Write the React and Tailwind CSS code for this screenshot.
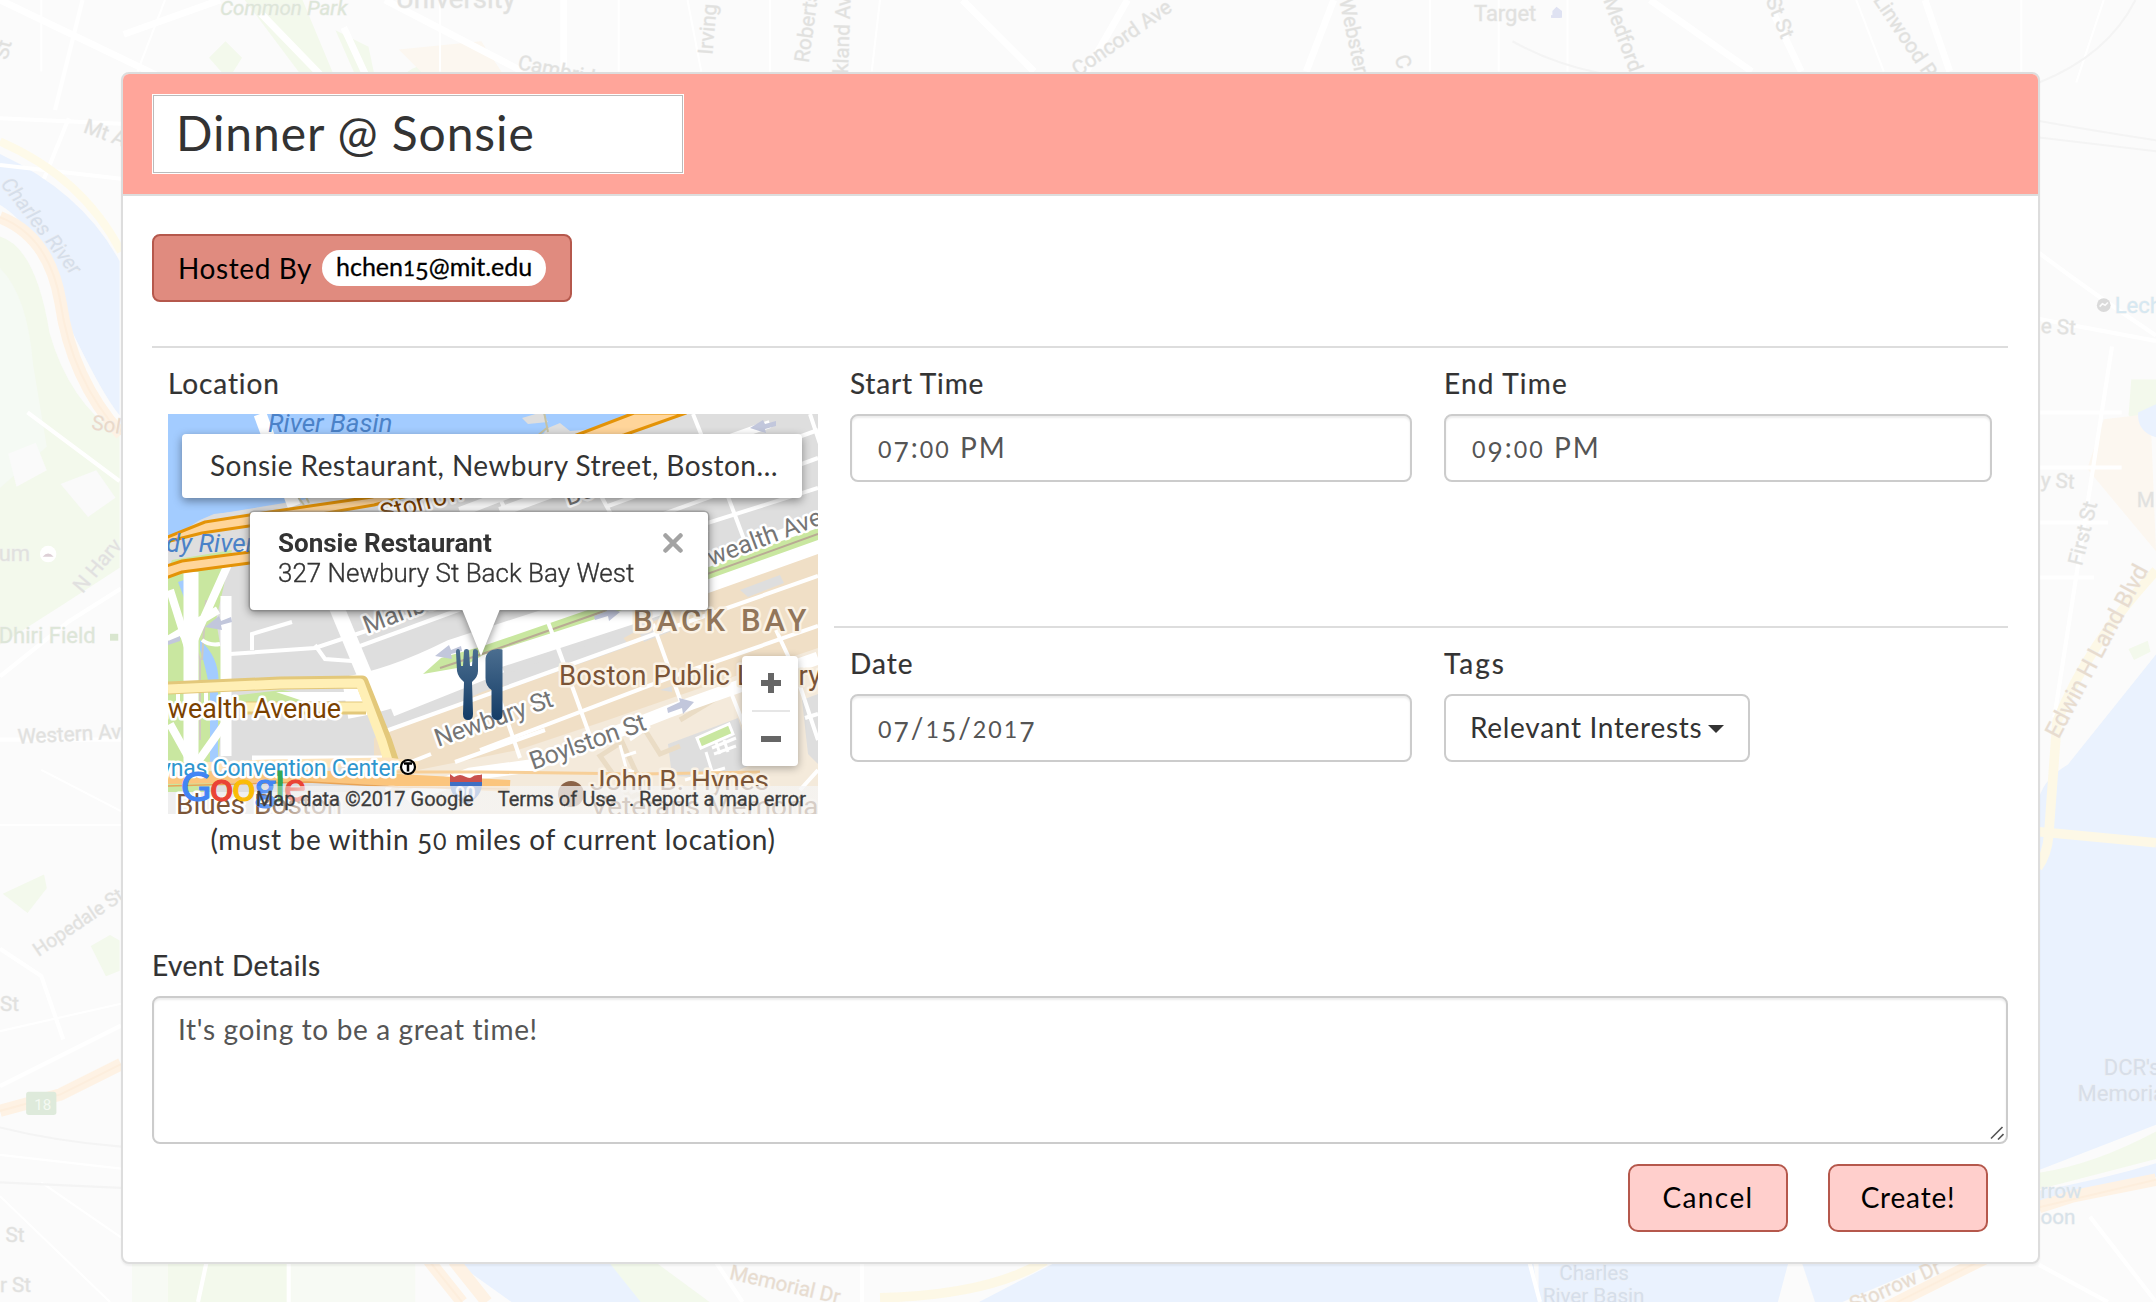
const LATO = "font-['Lato','Liberation_Sans',sans-serif]";

/* Old-style figures: 0, 1, 2 sit at x-height; 3, 4, 5, 7, 9 hang below the baseline. */
function OldStyle({ children }) {
  return (
    <span className="whitespace-pre">
      {children.split("").map((c, i) => {
        if ("012".includes(c)) return <span key={i} className="text-[0.83em]">{c}</span>;
        if ("34579".includes(c)) return <span key={i} className="relative top-[0.17em] text-[0.94em]">{c}</span>;
        return c;
      })}
    </span>
  );
}

function BackgroundMap() {
  return (
    <svg
      className="absolute inset-0 h-full w-full"
      viewBox="0 0 1568 947"
      preserveAspectRatio="none"
      fontFamily="Roboto, sans-serif"
      fill="none"
    >
      <rect width="1568" height="947" fill="#fbfbfb" />
      {/* parks */}
      <g fill="#f3f9ec">
        <path d="M178 0h42l30 72h-18zM152 42l12-12 12 12-10 16zM244 22l24 12 8 38h-10zM292 56q20-20 60 0l30 16h-90z" />
        <path d="M0 172q26 8 36 70 14 50 51 75v96l-40 26-47 30z" />
        <path d="M2 650l30-14 2 10-14 18zM66 688l14-8 7 4v22l-10 4z" />
        <path d="M122 919h90v28h-90z" />
        <path d="M440 919h38l38 28h-56z" />
        <path d="M1550 276h18v40l-20-14zM1548 472l14-6 2 8-12 6z" />
        <path d="M1483 853q40-6 85-30v20l-85 22z" />
      </g>
      <path d="M0 195q20 20 24 70l10 60-34 30z" fill="#f5faf4" />
      <path d="M96 917h26v30H96zM212 917h90v30h-90z" fill="#f7faf4" />
      <path d="M1530 305l34-4 4 100-50-60zM290 36l60-6 20 30-60-4z" fill="#fcf7f0" />
      <g fill="#fafafa">
        <path d="M6 330l20-8 8 20-22 12zM44 352l26-10 14 20-20 14z" />
      </g>
      {/* water */}
      <g fill="#eaf2fe">
        <path d="M0 112q60 28 87 78v112q-12-14-36-64Q34 170 0 149z" />
        <path d="M1483 580q4-14 21-24l64-80v342l-85 33z" />
        <path d="M1555 300l13-6v24q-14-4-13-18z" />
        <path d="M330 917h112l24 30H372zM770 917h345l4 30H712z" />
        <path d="M1119 917h182l-8 30h-174zM1310 917h100l-70 30h-20z" />
        <path d="M1483 866q45-8 85-20v10l-85 18z" />
      </g>
      {/* streets */}
      <g stroke="#ffffff" strokeWidth="3">
        <path d="M0 0l150 72M90 25L160 0M190 10l60 62M250 20l24 52M280 0l100 52M410 0v56M700 0l52 52M820 0l-30 52M970 0l-20 52M1200 0l74 52M1290 10l20 42M1400 0l18 52" strokeWidth="5" />
        <path d="M30 0v52M120 0l-20 52M320 0v52M450 0v52M500 0l10 52M560 0v52M640 0l-6 52M1040 0v52M1090 0v52M1140 0v52M1350 0l20 52M1470 0v52M1530 0l-20 60" strokeWidth="1.5" />
        <path d="M0 86l88 4M50 86l-18 44M0 120l88 10M60 0l-20 80" />
        <path d="M0 492l50-40 38-24M0 538h88M0 690l30 20 16 46M0 790l88-44M20 300l67 50" />
        <path d="M0 600h88M30 560l58 30M0 750l88-20M0 840l88 10M0 870l80 77M30 860l58 40" strokeWidth="1.5" />
        <path d="M1483 184q40 30 85 60M1536 252l-42 270M1483 232l85 16M1483 300h60M1483 340h60M1483 380h50M1483 420h40M1520 885l48 62M1483 920l50 27" />
        <path d="M150 919l-6 28M210 919v28M1112 917l8 30M627 917v30M520 917l20 30" />
      </g>
      <g stroke="#f4f4f4" strokeWidth="1.5">
        <path d="M1483 88q45 8 85 14M1483 100l85 10M1483 60q50-20 70-60M1100 30q70 40 190 26M0 820q40 10 88 14M0 860l88 4" />
      </g>
      {/* major roads */}
      <path d="M0 103q60 26 88 80" stroke="#fefae9" strokeWidth="6" />
      <g stroke="#fef2e4" strokeWidth="9">
        <path d="M0 158q36 14 44 62 8 56 44 96M0 808l44-12 44-22M312 917l24 30M330 917l24 30" />
        <path d="M1568 858l-60 12-25 8M1450 912l-80 40" />
      </g>
      <g stroke="#fdeedd" strokeWidth="1.5">
        <path d="M0 158q36 14 44 62 8 56 44 96M0 808l44-12 44-22M312 917l24 30M1568 858l-85 20M1450 912l-80 40" />
      </g>
      <g stroke="#fdf8e6" strokeWidth="7">
        <path d="M1568 415q-50 54-72 110l-6 82q-1 14-8 24M1483 605l85 8M640 944q80-2 120-27" />
      </g>
      {/* labels */}
      <g fill="#e1e1df" stroke="#efefee" strokeWidth="0.6" paintOrder="stroke" fontSize="15">
        <text x="160" y="11" fill="#dde6d8" fontStyle="italic">Common Park</text>
        <text x="288" y="6" fontSize="20">University</text>
        <text x="1072" y="15" fontSize="16">Target</text>
        <text x="376" y="50" transform="rotate(12 376 50)">Cambridge St</text>
        <text transform="translate(518 40) rotate(-85)">Irving</text>
        <text transform="translate(588 46) rotate(-82)">Roberts</text>
        <text transform="translate(616 72) rotate(-88)">Kirkland Ave</text>
        <text transform="translate(784 56) rotate(-35)">Concord Ave</text>
        <text transform="translate(974 0) rotate(78)">Webster</text>
        <text transform="translate(1014 42) rotate(70)">C</text>
        <text transform="translate(1166 0) rotate(70)">Medford</text>
        <text transform="translate(1284 0) rotate(68)">St St</text>
        <text transform="translate(1362 0) rotate(56)">Linwood Rd</text>
        <text transform="translate(5 44) rotate(-75)">St</text>
        <text transform="translate(60 96) rotate(20)">Mt A</text>
        <text transform="translate(0 134) rotate(52)" fill="#d5deeb" fontStyle="italic">Charles River</text>
        <text transform="translate(66 312) rotate(10)" fill="#ead9c9">Soldiers</text>
        <text x="-1" y="408" fontSize="16">um</text>
        <text transform="translate(60 432) rotate(-50)">N Harv</text>
        <text x="-1" y="468" fill="#dde6d8" fontSize="16">Dhiri Field</text>
        <text transform="translate(13 541) rotate(-3)">Western Av</text>
        <text transform="translate(28 696) rotate(-34)" fontSize="14">Hopedale St</text>
        <text x="0" y="735">St</text>
        <text x="4" y="903">St</text>
        <text x="0" y="940">r St</text>
        <text x="1484" y="242" transform="rotate(3 1482 242)">e St</text>
        <text x="1484" y="354" transform="rotate(3 1482 354)">y St</text>
        <text x="1538" y="228" fill="#d6e8f2" fontSize="16">Lech</text>
        <text x="1554" y="369">M</text>
        <text transform="translate(1514 412) rotate(-76)">First St</text>
        <text transform="translate(1497 538) rotate(-62)" fill="#e8dccf" fontSize="17">Edwin H Land Blvd</text>
        <text x="1530" y="782" fill="#d7dee9" fontSize="16">DCR's</text>
        <text x="1511" y="801" fill="#d7dee9" fontSize="16">Memorial</text>
        <text x="1484" y="871" fill="#d7e2ea">rrow</text>
        <text x="1484" y="890" fill="#d7e2ea">oon</text>
        <text x="1134" y="931" fill="#d5deeb">Charles</text>
        <text x="1122" y="948" fill="#d5deeb">River Basin</text>
        <text transform="translate(530 930) rotate(13)" fill="#e8dccf">Memorial Dr</text>
        <text transform="translate(1348 954) rotate(-24)" fill="#e8dccf">Storrow Dr</text>
      </g>
      <path d="M1129 13v-5l3-3 4 3v5z" fill="#dfe2f2" />
      <path d="M1128 12h7" stroke="#dfe2f2" strokeWidth="2" />
      <circle cx="1530" cy="222" r="5" fill="#dadada" />
      <path d="M1527 223l2-2 2 1 2-2" stroke="#fbfbfb" strokeWidth="1.2" />
      <circle cx="35" cy="403" r="6" fill="#ffffff" />
      <path d="M31 405q4-5 8 0z" fill="#ddcfd6" />
      <rect x="80" y="461" width="6" height="5" fill="#d9e6cf" />
      <rect x="19" y="794" width="22" height="17" rx="2" fill="#deeadb" />
      <text x="25" y="807" fontSize="11" fill="#f4f9f2">18</text>
    </svg>
  );
}

function LocationMap() {
  const halo = { stroke: "#ffffff", strokeWidth: 5, strokeLinejoin: "round", paintOrder: "stroke" };
  return (
    <svg className="block h-[400px] w-[650px]" viewBox="168 414 650 400" fontFamily="Roboto, sans-serif" fill="none">
      <defs>
        <linearGradient id="pin" gradientUnits="userSpaceOnUse" x1="0" y1="650" x2="0" y2="720">
          <stop offset="0" stopColor="#4a6d8f" />
          <stop offset="1" stopColor="#143c66" />
        </linearGradient>
      </defs>
      <rect x="168" y="414" width="650" height="400" fill="#dedede" />
      {/* river */}
      <path d="M168 414h470l-66 22-270 64-84 14-50 24z" fill="#a3ccff" />
      <path d="M522 418l20-6 6 10-20 2zM548 428l12-5 10 8 25-2-30 14-26-4z" fill="#dedede" />
      <path d="M544 412l4 20M548 427l-12 10" stroke="#c6c2a2" strokeWidth="2" />
      <path d="M200 520l14-6 90-10 76-12 240-70-10 30-230 60-212 28z" fill="#dedede" />
      <path d="M260 414l34 92" stroke="#ffffff" strokeWidth="13" />
      <path d="M298 497l6 8M306 497l3 6" stroke="#c6c2a2" strokeWidth="2" />

      {/* gray district streets */}
      <g stroke="#ffffff" strokeWidth="4">
        <path d="M818 430l-210 76M818 458l-210 76M818 488l-300 95M708 530l-130 46M818 554l-80 26-260 92" />
        <path d="M500 512l120-44M460 512l100-38" strokeWidth="10" />
        <path d="M770 424l-40 14" strokeWidth="8" />
        <path d="M693 414l16 40M727 494l36 96 24 56M600 494l12 22M496 490l14 30M810 414l20 60" />
        <path d="M230 654l85-6 60-20 70-26M252 650v-16l40-12M315 645l10 14 26 2 6-14 55-20 60-22" />
        <path d="M336 606l40 96" strokeWidth="15" />
        <path d="M376 690l96-34 30-10" />
        <path d="M390 706l110-44" strokeWidth="22" />
      </g>
      {/* Commonwealth Avenue mall */}
      <path d="M345 698q50-8 110-38L708 578l110-40" stroke="#ffffff" strokeWidth="42" />
      <path d="M355 690l90-30" stroke="#ffffff" strokeWidth="12" />
      <path d="M423 674l18-16 42-12 125-43 210-75v12l-210 75-125 40-20 12z" fill="#c9e7a0" />
      <path d="M440 668l45-15 125-44 208-75" stroke="#b9ab94" strokeWidth="2" />

      {/* Back Bay shopping district */}
      <path d="M374 738l60-24 48-22 120-42 98-54 118-42v260H400l-26-50z" fill="#f0dfc6" />
      <path d="M398 790l20-20 100-20 90-30 110-38 100-34v166H400z" fill="#f4eadb" />
      <path d="M500 676l120-42 10 12-125 44zM740 590l40-15 4 8-36 14zM640 634l30-12 4 8-30 12zM545 735l18-6M660 690l12-4v6z" fill="#dedede" />
      <path d="M668 744l70-26 14 46-30 14-50-2zM802 700l16-6v70l-10-10z" fill="#dedede" />
      <path d="M600 756l22-14 14 30 14 16-20 10zM640 722l20 32 20-8M730 690l-50 30" stroke="#eadcc5" strokeWidth="5" />
      <path d="M620 745l8 30M624 756l12-4M622 768l12 4M630 740l20-14" stroke="#ffffff" strokeWidth="3" />
      <path d="M697 738l32-14 4 10-32 14z" fill="#c9e7a0" stroke="#ffffff" strokeWidth="3" />
      <path d="M712 748l24-10M714 754l22-8M716 742l4 12M724 740l4 12" stroke="#ffffff" strokeWidth="3" />
      <path d="M706 752l8 26M685 780l40-12" stroke="#ffffff" strokeWidth="3" />
      <g stroke="#ffffff" strokeWidth="4">
        <path d="M383 732l250-90 60-22 125-44M480 750l200-76 138-48" />
        <path d="M455 762l90-32M391 770l40-16M386 790l30-24" />
        <path d="M548 622l15 40M500 700l20 58M556 642l34 94M653 624l28 78M776 630l14 30M730 690l24 60M798 680l20 60" />
        <path d="M400 800l70-26 60-8 137-54 151-54" strokeWidth="13" />
        <path d="M805 718l13-4M800 790l18-20" />
      </g>

      {/* park strip at the left edge */}
      <path d="M172 560l60-10-16 70 10 60-10 100-34 34-14-6V570z" fill="#c9e7a0" />
      <path d="M178 582l12-4-2 30zM200 640q22 20 18 50v70l-8 6V690q-6-30-10-40z" fill="#a3ccff" />
      <g stroke="#d0c9bf" strokeWidth="2">
        <path d="M192 560l-6 60 14 40v80M206 600l-4 60M170 730l26 40M224 720l-34 50" />
      </g>
      <g stroke="#ffffff">
        <path d="M191 572v190" strokeWidth="15" />
        <path d="M170 590l22 70M230 560l-36 80M168 640l50-30M170 724l20 36M226 722l-34 48" strokeWidth="8" />
        <path d="M226 596v160" strokeWidth="11" />
        <path d="M228 560l24-16M202 640q8 6 18 4M178 690v14M206 690v12" strokeWidth="4" />
        <path d="M252 758h130" strokeWidth="5" />
      </g>

      {/* Storrow Drive */}
      <g fill="#ffd59a" stroke="#e49307" strokeWidth="3" strokeLinejoin="round">
        <path d="M160 540l45-18 58-9 47-7 62-9 202-61 60-23h52l-62 22-140 40-110 30-118 20-54 8-32 8-20 12z" />
        <path d="M160 568l22-7 68-9 60-8v10l-60 9-68 9-22 8z" />
      </g>

      {/* Commonwealth Avenue (yellow) */}
      <g strokeLinejoin="round">
        <path d="M232 696l50-6 34 6-10 6h-70z" fill="#c9e7a0" />
        <path d="M276 692h90l-6 8-54 2z" fill="#ffffff" />
        <path d="M168 688l112-5 82-1 24 60 8 24M246 708h120" stroke="#e3c87a" strokeWidth="13" />
        <path d="M168 689l112-5 80-1 22 58 8 26M246 707h122" stroke="#ffefb5" strokeWidth="9" />
      </g>

      {/* Massachusetts Turnpike */}
      <path d="M168 768l100-4 120-2 30 4" stroke="#fde4bd" strokeWidth="9" />
      <path d="M168 778l140-2 90 4 112 6" stroke="#fbc57d" strokeWidth="12" />
      <path d="M168 786l140-4 90 5 110 2" stroke="#e9a455" strokeWidth="1.5" />
      <path d="M390 772h90l160 2 120-2" stroke="#f7cf98" strokeWidth="3" />
      <path d="M168 792h232l20 22H168z" fill="#efefef" />

      {/* one-way arrows */}
      <g fill="#c2c7dc">
        <path d="M205 627l14-11 2 5 10-4 1 5-11 3 1 5zM168 641l12-5v5l-12 4zM435 656l14-11 2 5 10-4 1 5-11 3 1 5zM750 428l13-8 2 4 11-3v5l-11 3 1 4z" />
        <path d="M620 612l-14-6 1 5-13 5 1 4 13-4 1 5zM694 702l-15-4 1 4-13 6 1 5 14-5 1 6z" />
      </g>

      {/* map labels */}
      <g fill="#757575" fontSize="25" {...halo}>
        <text x="268" y="432" fontSize="26" fontStyle="italic" fill="#4b82c8" stroke="none">River Basin</text>
        <text x="166" y="552" fontSize="26" fontStyle="italic" fill="#4b82c8" stroke="none">dy River</text>
        <text transform="translate(383 522) rotate(-16)" fill="#7a4100">Storrow Dr</text>
        <text transform="translate(568 506) rotate(-20)">Beacon St</text>
        <text transform="translate(367 634) rotate(-21)">Marlborough St</text>
        <text transform="translate(711 566) rotate(-20.5)">wealth Ave</text>
        <text x="633" y="631" fontSize="31" fontWeight="500" letterSpacing="4.1" fill="#92765a" stroke="#fbf3e6">BACK BAY</text>
        <text x="559" y="685" fontSize="27.5" letterSpacing="0.15" fill="#7b5537" stroke="#fbf3e6">Boston Public Library</text>
        <text transform="translate(438 747) rotate(-19.5)" letterSpacing="-0.4">Newbury St</text>
        <text transform="translate(533 770) rotate(-19.5)" letterSpacing="-0.4">Boylston St</text>
        <text x="153" y="718" fontSize="26.8" fill="#7a4100">nwealth Avenue</text>
        <text x="160" y="776" fontSize="23" letterSpacing="-0.2" fill="#2f96ce">ynas Convention Center</text>
        <text x="590" y="790" fontSize="28" fill="#7b5537" stroke="#fbf3e6">John B. Hynes</text>
        <text x="590" y="816" fontSize="28" fill="#7b5537" stroke="#fbf3e6">Veterans Memorial</text>
        <text x="176" y="814" fontSize="28" fill="#7b5537">Blues</text>
        <text x="254" y="814" fontSize="28" fill="#7b5537">Boston</text>
      </g>
      <circle cx="408" cy="767" r="7" fill="#ffffff" stroke="#000000" strokeWidth="2.2" />
      <path d="M404 763.500h8M408 763.500v8" stroke="#000000" strokeWidth="2.5" />
      <circle cx="571" cy="794" r="13" fill="#8b6347" />
      <path d="M450 774l4 3q4-2 6-2t6 2 6 0 6-2 4-1v8h-32z" fill="#c9514e" />
      <path d="M450 782h32q1 14-16 23-17-9-16-23z" fill="#3e6fc4" />
      <text x="455" y="799" fontSize="18" fontWeight="700" fill="#ffffff">90</text>
    </svg>
  );
}

function ForkKnifePin() {
  return (
    <svg className="absolute left-[287px] top-[235px] h-[72px] w-[48px]" viewBox="455 649 48 72">
      <g fill="url(#pin)">
        <path d="M456 652q0-3 2-3t2 3l1 14h2l1-15q0-2 2.500-2t2.500 2l1 15h2l1-15q0-2 2-2t3 2v20q0 6-6 11l1 32q0 6-5 6t-5-6l1-32q-6-5-7-11z" />
        <path d="M502.500 650v65q0 5-5 5t-6-5v-25q-6-4-6-12v-18q0-10 12-11 5 0 5 1z" />
      </g>
    </svg>
  );
}

function GoogleLogo() {
  return (
    <div className={`${LATO} text-[41px] leading-none tracking-[-0.8px] [-webkit-text-stroke:1.2px_currentColor]`}>
      <span className="text-[#4285f4]">G</span>
      <span className="text-[#ea4335]">o</span>
      <span className="text-[#fbbc05]">o</span>
      <span className="text-[#4285f4]">g</span>
      <span className="text-[#34a853]">l</span>
      <span className="text-[#ea4335]">e</span>
    </div>
  );
}

function MapPanel() {
  return (
    <div className="relative h-[400px] w-[650px] overflow-hidden font-['Roboto',sans-serif]">
      <LocationMap />

      <div className="absolute left-[13px] top-[351px]">
        <GoogleLogo />
      </div>
      <div className="absolute bottom-0 right-0 flex h-[28px] w-[565px] items-center justify-end bg-linear-to-r from-[#f5f5f5]/0 to-[#f5f5f5]/75 to-10% pb-[2px] pr-[12px] text-[20px] leading-none text-[#3c3c3c] [-webkit-text-stroke:0.3px_#3c3c3c]">
        <span>Map data ©2017 Google</span>
        <span className="ml-[24px]">Terms of Use</span>
        <span className="ml-[8px] w-[15px] text-center">.</span>
        <span>Report a map error</span>
      </div>

      <div className="absolute bottom-[48px] right-[20px] flex h-[110px] w-[56px] flex-col items-center rounded-[4px] bg-white pl-[2px] shadow-[0_2px_8px_rgba(0,0,0,0.3)]">
        <div className="flex h-[54px] items-center">
          <svg className="h-[22px] w-[22px]" viewBox="0 0 22 22">
            <path d="M11 1v20M1 11h20" stroke="#666" strokeWidth="6" />
          </svg>
        </div>
        <div className="h-[2px] w-[38px] bg-[#e6e6e6]" />
        <div className="flex h-[54px] items-center">
          <svg className="h-[22px] w-[22px]" viewBox="0 0 22 22">
            <path d="M1 11h20" stroke="#666" strokeWidth="6" />
          </svg>
        </div>
      </div>

      {/* info window */}
      <div className="absolute left-[82px] top-[98px] drop-shadow-[0_2px_4px_rgba(0,0,0,0.45)]">
        <div className="flex h-[98px] w-[458px] items-start justify-between rounded-[4px] bg-white pl-[28px] pr-[25px] pt-[16px] text-[26px] leading-[30px] text-[#333] shadow-[0_0_0_1.500px_rgba(120,120,120,0.45)]">
          <div>
            <div className="font-bold">Sonsie Restaurant</div>
            <div className="font-light [-webkit-text-stroke:0.35px_#333]">327 Newbury St Back Bay West</div>
          </div>
          <svg className="mt-[5px] h-[20px] w-[20px]" viewBox="0 0 20 20">
            <path d="M2.500 2.500l15 15M17.500 2.500l-15 15" stroke="#a3a3a3" strokeWidth="4.500" strokeLinecap="round" />
          </svg>
        </div>
        <svg className="ml-[212px] block h-[48px] w-[38px]" viewBox="0 0 38 48">
          <path d="M0-1h38L19 46z" fill="#ffffff" />
        </svg>
      </div>
      <ForkKnifePin />

      <div className={`absolute left-[14px] top-[20px] flex h-[64px] w-[620px] items-center rounded-[4px] bg-white pb-[2px] pl-[28px] text-[28px] tracking-[0.45px] text-[#333] shadow-[0_3px_10px_rgba(0,0,0,0.4)] ${LATO}`}>
        Sonsie Restaurant, Newbury Street, Boston…
      </div>
    </div>
  );
}

function Label({ children, className = "" }) {
  return (
    <div className={`h-10 text-[28px] leading-[39px] text-[#333] [-webkit-text-stroke:0.2px_#333] ${className}`}>
      {children}
    </div>
  );
}

function Field({ label, spacing, children }) {
  return (
    <div>
      <Label className={spacing}>{label}</Label>
      <div className="mt-[10px]">{children}</div>
    </div>
  );
}

function TextBox({ children, spacing = "tracking-[2px]" }) {
  return (
    <div className={`flex h-[68px] items-center rounded-[8px] border-2 border-[#ccc] bg-white px-[26px] pb-[2px] text-[28px] text-[#555] shadow-[inset_0_2px_2px_rgba(0,0,0,0.075)] ${spacing}`}>
      <OldStyle>{children}</OldStyle>
    </div>
  );
}

function ActionButton({ children, spacing }) {
  return (
    <button className={`h-[68px] w-[160px] rounded-[10px] border-2 border-[#b5584c] bg-[#ffcfcc] pb-[2px] text-[28px] text-black ${spacing}`}>
      {children}
    </button>
  );
}

export default function App() {
  return (
    <div className={`relative h-[1302px] w-[2156px] overflow-hidden pl-[121px] pt-[72px] ${LATO}`}>
      <BackgroundMap />

      <div className="relative h-[1192px] w-[1919px] overflow-hidden rounded-[8px] border-2 border-[#ddd] bg-white shadow-[0_2px_2px_rgba(0,0,0,0.05)]">
        <div className="flex h-[122px] items-center border-b-2 border-[#ddd] bg-[#ffa59a] pl-[29px]">
          <div className="h-[80px] w-[532px] border border-white bg-white">
            <div className="flex h-full items-center border border-[#bbb] pb-[3px] pl-[22px] text-[48px] leading-none tracking-[0.9px] text-[#333]">
              Dinner @ Sonsie
            </div>
          </div>
        </div>

        <div className="pl-[29px] pr-[30px] pt-[38px]">
          <div className="flex h-[68px] w-[420px] items-center gap-[10px] rounded-[8px] border-2 border-[#b5584c] bg-[#e08b7f] pl-[24px] text-[28px] tracking-[0.6px] text-black">
            <span className="-mt-px">Hosted By</span>
            <span className="flex h-[36px] w-[224px] items-center justify-center whitespace-nowrap rounded-full bg-white pb-[2px] text-[25px] leading-none tracking-[0px] [-webkit-text-stroke:0.3px_#000]">
              <OldStyle>hchen15@mit.edu</OldStyle>
            </span>
          </div>

          <div className="mt-[44px] grid grid-cols-[682px_594px_580px] grid-rows-[280px_234px]">
            <div className="row-span-2 border-t-2 border-[#ddd] px-4 pt-4">
              <Field label="Location" spacing="tracking-[0.9px]">
                <MapPanel />
              </Field>
              <div className="mt-[6px] text-center text-[28px] leading-[38px] tracking-[0.65px] text-[#333]">
                <OldStyle>(must be within 50 miles of current location)</OldStyle>
              </div>
            </div>
            <div className="border-t-2 border-[#ddd] px-4 pt-4">
              <Field label="Start Time" spacing="tracking-[0.8px]">
                <TextBox>07:00 PM</TextBox>
              </Field>
            </div>
            <div className="border-t-2 border-[#ddd] px-4 pt-4">
              <Field label="End Time" spacing="tracking-[1.2px]">
                <TextBox>09:00 PM</TextBox>
              </Field>
            </div>
            <div className="border-t-2 border-[#ddd] px-4 pt-4">
              <Field label="Date" spacing="tracking-[1px]">
                <TextBox>07/15/2017</TextBox>
              </Field>
            </div>
            <div className="border-t-2 border-[#ddd] px-4 pt-4">
              <Field label="Tags" spacing="tracking-[2px]">
                <button className="flex h-[68px] w-[306px] items-center rounded-[8px] border-2 border-[#ccc] bg-white pb-[2px] pl-[24px] text-[28px] tracking-[0.7px] text-[#333]">
                  <span className="whitespace-nowrap">Relevant Interests</span>
                  <span className="ml-[6px] mt-[4px] border-x-8 border-t-8 border-x-transparent border-t-[#333]" />
                </button>
              </Field>
            </div>
          </div>

          <div className="mt-[86px]">
            <Field label="Event Details" spacing="tracking-[0.5px]">
              <div className="relative h-[148px] rounded-[8px] border-2 border-[#ccc] bg-white px-[24px] pt-[12px] text-[28px] leading-[38px] tracking-[0.65px] text-[#555] shadow-[inset_0_2px_2px_rgba(0,0,0,0.075)]">
                It's going to be a great time!
                <svg className="absolute bottom-[2px] right-[2px] h-[14px] w-[14px]" viewBox="0 0 14 14">
                  <path d="M1 12.500L12.500 1M8 13.500l5.500-5.500" stroke="#555" strokeWidth="1.600" />
                </svg>
              </div>
            </Field>
          </div>

          <div className="mt-[20px] flex justify-end gap-[40px] pr-[20px]">
            <ActionButton spacing="tracking-[1.4px]">Cancel</ActionButton>
            <ActionButton spacing="tracking-[0.8px]">Create!</ActionButton>
          </div>
        </div>
      </div>
    </div>
  );
}
